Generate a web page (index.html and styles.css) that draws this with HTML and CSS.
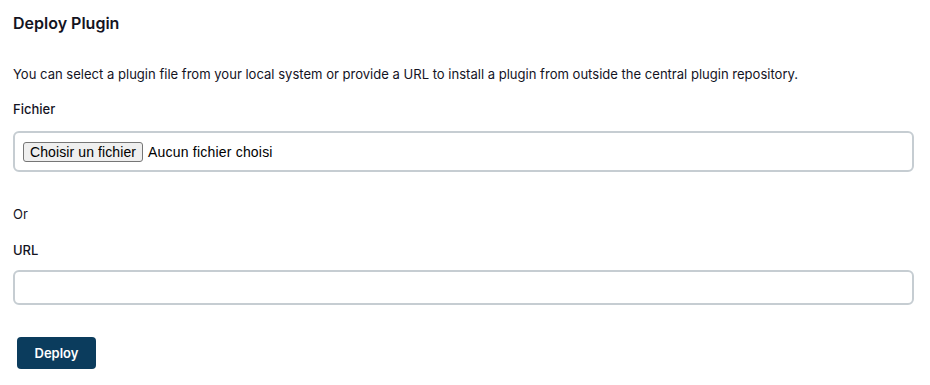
FILE: index.html
```html
<!DOCTYPE html>
<html>
<head>
    <link rel="stylesheet" href="styles.css">
</head>
<body>
    <div class="section">
        <h2 class="section-title">Deploy Plugin</h2>
        <p class="description">You can select a plugin file from your local system or provide a URL to install a plugin from outside the central plugin repository.</p>
        <div class="form-group">
            <label class="field-label" for="plugin-file">Fichier</label>
            <div class="file-box">
                <label class="file-button" for="plugin-file">Choisir un fichier</label>
                <span class="file-name">Aucun fichier choisi</span>
                <input type="file" id="plugin-file" class="file-hidden">
            </div>
        </div>
        <p class="or">Or</p>
        <div class="form-group">
            <label class="field-label url-label" for="plugin-url">URL</label>
            <input type="text" id="plugin-url" class="text-input">
        </div>
        <button class="deploy-button">Deploy</button>
    </div>
</body>
</html>
```

FILE: styles.css
```css
body {
    font-family: Inter, "Noto Sans", sans-serif;
    margin: 0;
    padding: 0 16px 0 13px;
    background: #fff;
    color: #14141f;
}
.section {
    display: flex;
    flex-direction: column;
    align-items: flex-start;
}
.section-title {
    font-size: 16px;
    font-weight: 600;
    margin: 12px 0 0;
    line-height: 22px;
}
.description {
    font-size: 13.05px;
    margin: 30px 0 0;
    line-height: 20px;
}
.form-group {
    width: 100%;
}
.field-label {
    display: block;
    font-size: 13px;
    font-weight: 500;
    line-height: 20px;
    margin: 15px 0 12px;
}
.url-label {
    margin: 16px 0 10px;
}
.file-box {
    display: flex;
    align-items: center;
    gap: 5px;
    box-sizing: border-box;
    height: 41px;
    padding: 0 8px;
    border: 2px solid #c6cdd2;
    border-radius: 6px;
    font-family: "Liberation Sans", Arial, sans-serif;
    font-size: 14px;
}
.file-button {
    background: #efefef;
    border: 1px solid #767676;
    border-radius: 3px;
    padding: 1px 6px;
    font-size: 14px;
    letter-spacing: 0.1px;
    color: #000;
}
.file-name {
    color: #000;
    letter-spacing: 0.2px;
}
.file-hidden {
    display: none;
}
.or {
    font-size: 13px;
    margin: 32px 0 0;
    line-height: 20px;
}
.text-input {
    box-sizing: border-box;
    width: 100%;
    height: 35px;
    border: 2px solid #c6cdd2;
    border-radius: 6px;
    margin: 0;
}
.deploy-button {
    margin: 32px 0 0 4px;
    width: 79px;
    height: 32px;
    background: #0b3c5d;
    color: #fff;
    border: none;
    border-radius: 4px;
    font-family: Inter, sans-serif;
    font-size: 13px;
    font-weight: 600;
}
```
